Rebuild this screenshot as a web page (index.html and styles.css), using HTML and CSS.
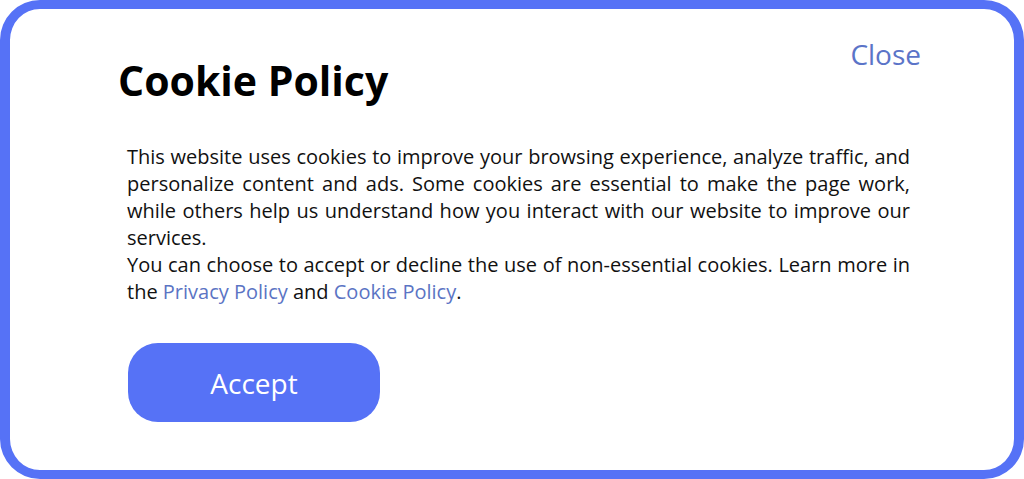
FILE: index.html
```html
<!DOCTYPE html>
<html lang="en">
<head>
  <meta charset="UTF-8">
  <title>Cookie Policy</title>
  <link rel="stylesheet" href="styles.css">
</head>
<body>
  <div class="cookie-card">
    <div class="cookie-header">
      <h1 class="cookie-title">Cookie Policy</h1>
      <a href="#" class="close-link">Close</a>
    </div>

    <div class="cookie-text">
      <p>This website uses cookies to improve your browsing experience, analyze traffic, and personalize content and ads. Some cookies are essential to make the page work, while others help us understand how you interact with our website to improve our services.</p>
      <p>You can choose to accept or decline the use of non-essential cookies. Learn more in the <a href="#">Privacy Policy</a> and <a href="#">Cookie Policy</a>.</p>
    </div>

    <button class="accept-btn">Accept</button>
  </div>
</body>
</html>
```

FILE: styles.css
```css
html, body {
  margin: 0;
  height: 100%;
  background: #ffffff;
}

body {
  font-family: 'Open Sans', 'Noto Sans', sans-serif;
  color: #111111;
}

.cookie-card {
  box-sizing: border-box;
  height: 479px;
  border: 10px solid #5672f6;
  border-top-width: 9px;
  border-bottom-width: 9px;
  border-radius: 40px;
  background: #ffffff;
  padding: 0 93px 0 108px;
}

.cookie-header {
  display: flex;
  justify-content: space-between;
  align-items: flex-start;
}

.cookie-title {
  margin: 41px 0 0 0;
  font-size: 41px;
  font-weight: 700;
  line-height: 60px;
  color: #000000;
}

.close-link {
  margin-top: 26px;
  font-size: 28px;
  line-height: 38px;
  color: #5b74c8;
  text-decoration: none;
}

.cookie-text {
  margin: 33px 0 0 9px;
  width: 783px;
  font-size: 20px;
  line-height: 27px;
  text-align: justify;
}

.cookie-text p {
  margin: 0;
}

.cookie-text a {
  color: #5b74c4;
  text-decoration: none;
}

.accept-btn {
  display: block;
  margin: 38px 0 0 10px;
  width: 252px;
  height: 79px;
  border: none;
  border-radius: 30px;
  background: #5672f6;
  color: #ffffff;
  font-family: 'Open Sans', 'Noto Sans', sans-serif;
  font-size: 28px;
  cursor: pointer;
}
```
